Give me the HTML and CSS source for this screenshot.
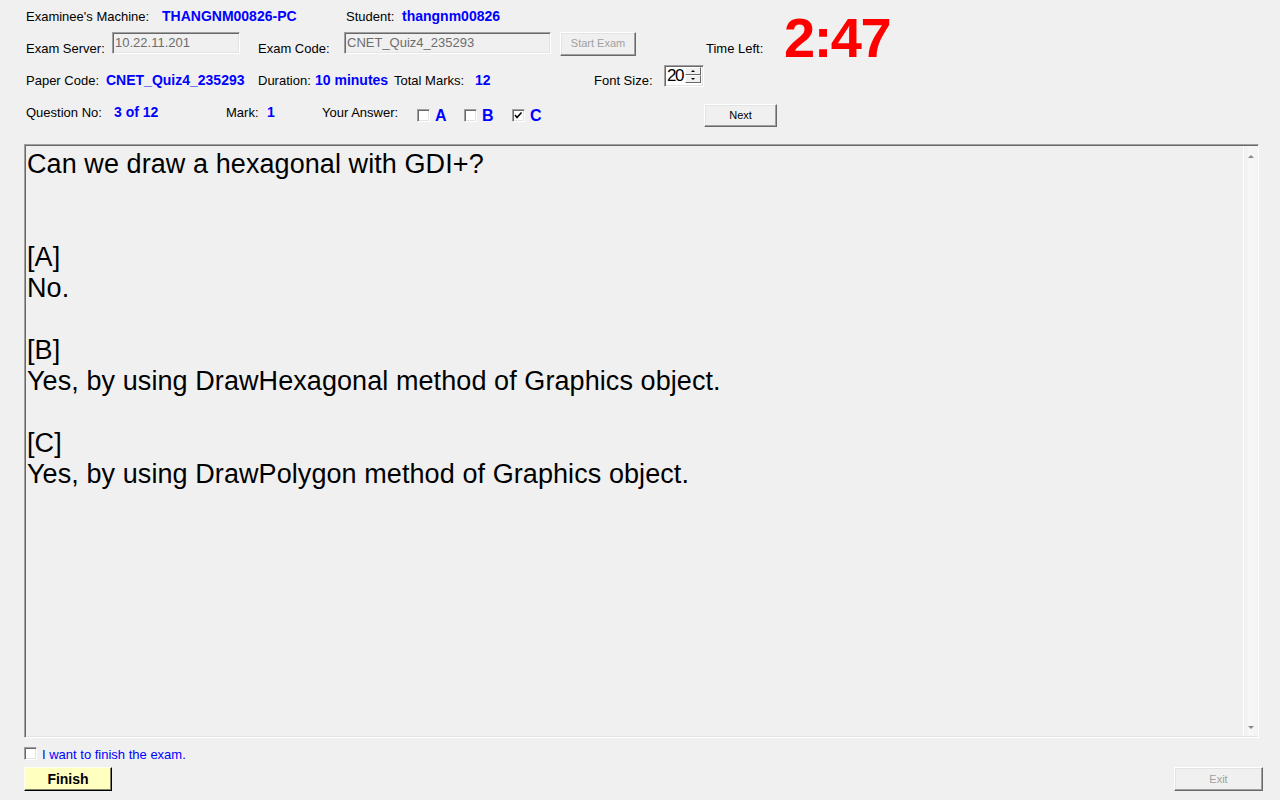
FILE: index.html
```html
<!DOCTYPE html>
<html>
<head>
<meta charset="utf-8">
<title>Exam Client</title>
<link rel="stylesheet" href="styles.css">
</head>
<body>
<div class="app">
  <div class="row r1">
    <span class="lbl w136">Examinee's Machine:</span>
    <span class="val w184">THANGNM00826-PC</span>
    <span class="lbl w56">Student:</span>
    <span class="val">thangnm00826</span>
  </div>

  <div class="row r2">
    <span class="lbl w86">Exam Server:</span>
    <div class="tbox tb1">10.22.11.201</div>
    <span class="lbl w86 ml18">Exam Code:</span>
    <div class="tbox tb2">CNET_Quiz4_235293</div>
    <div class="btn btn-start">Start Exam</div>
    <span class="lbl w78 ml70">Time Left:</span>
    <span class="timer">2:47</span>
  </div>

  <div class="row r3">
    <span class="lbl w80">Paper Code:</span>
    <span class="val w152">CNET_Quiz4_235293</span>
    <span class="lbl w57">Duration:</span>
    <span class="val w79">10 minutes</span>
    <span class="lbl w81">Total Marks:</span>
    <span class="val w119">12</span>
    <span class="lbl w70">Font Size:</span>
    <div class="spin">
      <div class="spin-val">20</div>
      <div class="spin-btns">
        <div class="spin-btn"><span class="tri-up small"></span></div>
        <div class="spin-btn"><span class="tri-down small"></span></div>
      </div>
    </div>
  </div>

  <div class="row r4">
    <span class="lbl w88">Question No:</span>
    <span class="val w112">3 of 12</span>
    <span class="lbl w41">Mark:</span>
    <span class="val w55">1</span>
    <span class="lbl w95">Your Answer:</span>
    <div class="opt w47">
      <span class="cb"></span>
      <span class="opt-letter">A</span>
    </div>
    <div class="opt w48">
      <span class="cb"></span>
      <span class="opt-letter">B</span>
    </div>
    <div class="opt w192">
      <span class="cb"><svg class="check" width="11" height="11" viewBox="0 0 11 11"><polyline points="2,5 4,7.5 8.5,2.5" fill="none" stroke="#000" stroke-width="1.6"/></svg></span>
      <span class="opt-letter">C</span>
    </div>
    <div class="btn btn-next">Next</div>
  </div>

  <div class="qbox">
    <div class="qtext">Can we draw a hexagonal with GDI+?


[A]
No.

[B]
Yes, by using DrawHexagonal method of Graphics object.

[C]
Yes, by using DrawPolygon method of Graphics object.</div>
    <div class="scroll">
      <span class="tri-up"></span>
      <span class="tri-down"></span>
    </div>
  </div>

  <div class="finish-row">
    <span class="cb"></span>
    <span class="finish-text">I want to finish the exam.</span>
  </div>

  <div class="actions">
    <div class="btn-finish">Finish</div>
    <div class="btn btn-exit">Exit</div>
  </div>
</div>
</body>
</html>
```

FILE: styles.css
```css
html, body {
  margin: 0;
  padding: 0;
  background: #f0f0f0;
  width: 1280px;
  height: 800px;
  overflow: hidden;
  font-family: "Liberation Sans", Arial, sans-serif;
  font-size: 13px;
  color: #000;
}

.app {
  width: 1280px;
  height: 800px;
}

.row {
  display: flex;
  align-items: flex-start;
  padding-left: 26px;
  box-sizing: border-box;
}

.r1 { height: 32px; padding-top: 9px; align-items: baseline; }
.r2 { height: 26px; }
.r3 { height: 38px; }
.r4 { height: 40px; margin-bottom: 8px; }

.lbl {
  font-size: 13px;
  line-height: 15px;
  white-space: nowrap;
  flex: none;
}

.val {
  font-size: 14px;
  font-weight: bold;
  line-height: 15px;
  color: #0000ff;
  white-space: nowrap;
  flex: none;
}

.r2 .lbl { margin-top: 9px; }
.r3 .lbl, .r3 .val { margin-top: 15px; }
.r4 .lbl, .r4 .val { margin-top: 9px; }

.w136 { width: 136px; }
.w184 { width: 184px; }
.w56 { width: 56px; }
.w86 { width: 86px; }
.w78 { width: 78px; }
.w80 { width: 80px; }
.w152 { width: 152px; }
.w57 { width: 57px; }
.w79 { width: 79px; }
.w81 { width: 81px; }
.w119 { width: 119px; }
.w70 { width: 70px; }
.w88 { width: 88px; }
.w112 { width: 112px; }
.w41 { width: 41px; }
.w55 { width: 55px; }
.w95 { width: 95px; }
.w47 { width: 47px; }
.w48 { width: 48px; }
.w192 { width: 192px; }
.ml18 { margin-left: 18px; }
.ml70 { margin-left: 70px; }

/* sunken text boxes */
.tbox {
  box-sizing: border-box;
  height: 22px;
  border: 1px solid;
  border-color: #a0a0a0 #ffffff #ffffff #a0a0a0;
  box-shadow: inset 1px 1px 0 #696969, inset -1px -1px 0 #e3e3e3;
  background: #f0f0f0;
  color: #6d6d6d;
  font-size: 13px;
  line-height: 20px;
  padding-left: 2px;
  white-space: nowrap;
  flex: none;
}
.tb1 { width: 128px; }
.tb2 { width: 207px; }

/* raised buttons */
.btn {
  box-sizing: border-box;
  border: 1px solid;
  border-color: #ffffff #696969 #696969 #ffffff;
  box-shadow: inset -1px -1px 0 #a0a0a0, inset 1px 1px 0 #e3e3e3;
  background: #f0f0f0;
  font-size: 11px;
  text-align: center;
  flex: none;
}

.btn-start {
  width: 76px;
  height: 24px;
  line-height: 21px;
  margin-left: 9px;
  color: #a0a0a0;
}

.btn-next {
  width: 73px;
  height: 23px;
  line-height: 21px;
  margin-top: 8px;
}

.btn-exit {
  width: 89px;
  height: 24px;
  line-height: 22px;
  color: #a0a0a0;
}

.timer {
  font-size: 56px;
  font-weight: bold;
  line-height: 56px;
  letter-spacing: -1.5px;
  color: #ff0000;
  margin-top: -22px;
  flex: none;
}

/* spinner */
.spin {
  box-sizing: border-box;
  width: 40px;
  height: 22px;
  margin-top: 7px;
  border: 1px solid;
  border-color: #a0a0a0 #ffffff #ffffff #a0a0a0;
  box-shadow: inset 1px 1px 0 #696969, inset -1px -1px 0 #e3e3e3;
  background: #ffffff;
  display: flex;
  flex: none;
}

.spin-val {
  flex: 1;
  font-size: 17px;
  line-height: 20px;
  letter-spacing: -1.5px;
  padding-left: 2px;
}

.spin-btns {
  width: 16px;
  display: flex;
  flex-direction: column;
  padding: 1px 2px 3px 0;
}

.spin-btn {
  flex: 1;
  box-sizing: border-box;
  border: 1px solid;
  border-color: #ffffff #696969 #696969 #ffffff;
  background: #f0f0f0;
  display: flex;
  align-items: center;
  justify-content: center;
}

.tri-up, .tri-down {
  width: 0;
  height: 0;
  border-left: 4px solid transparent;
  border-right: 4px solid transparent;
}
.tri-up { border-bottom: 4px solid #8a8a8a; }
.tri-down { border-top: 4px solid #8a8a8a; }
.tri-up.small { border-left-width: 2px; border-right-width: 2px; border-bottom: 2px solid #000; }
.tri-down.small { border-left-width: 2px; border-right-width: 2px; border-top: 2px solid #000; }

/* answer options */
.opt {
  display: flex;
  align-items: flex-start;
  flex: none;
}

.cb {
  box-sizing: border-box;
  width: 13px;
  height: 13px;
  border: 1px solid;
  border-color: #a0a0a0 #ffffff #ffffff #a0a0a0;
  box-shadow: inset 1px 1px 0 #696969, inset -1px -1px 0 #e3e3e3;
  background: #ffffff;
  display: block;
  position: relative;
  flex: none;
}

.opt .cb { margin-top: 13px; }

.check {
  position: absolute;
  left: 0;
  top: 0;
}

.opt-letter {
  font-size: 16px;
  font-weight: bold;
  line-height: 18px;
  color: #0000ff;
  margin-left: 5px;
  margin-top: 11px;
}

/* question box */
.qbox {
  box-sizing: border-box;
  margin-left: 24px;
  width: 1235px;
  height: 594px;
  border: 1px solid;
  border-color: #a0a0a0 #ffffff #ffffff #a0a0a0;
  box-shadow: inset 1px 1px 0 #696969, inset -1px -1px 0 #e3e3e3;
  background: #f0f0f0;
  display: flex;
}

.qtext {
  flex: 1;
  padding: 4px 0 0 2px;
  font-size: 27px;
  letter-spacing: 0.08px;
  line-height: 31px;
  white-space: pre-line;
  color: #000;
}

.scroll {
  width: 15px;
  margin: 1px 0 1px 0;
  border-left: 1px solid #ffffff;
  background: linear-gradient(to right, #f0f0f0, #f7f7f7 40%, #f3f3f3);
  display: flex;
  flex-direction: column;
  justify-content: space-between;
  align-items: center;
  padding: 9px 0 7px 0;
  box-sizing: border-box;
}

.scroll .tri-up { border-left-width: 3px; border-right-width: 3px; border-bottom-width: 3px; }
.scroll .tri-down { border-left-width: 3px; border-right-width: 3px; border-top-width: 3px; }

/* finish area */
.finish-row {
  display: flex;
  align-items: flex-start;
  margin: 9px 0 0 24px;
  height: 13px;
}

.finish-text {
  color: #0000ff;
  font-size: 13px;
  line-height: 15px;
  margin: 0 0 0 5px;
}

.actions {
  display: flex;
  justify-content: space-between;
  margin: 7px 17px 0 24px;
}

.btn-finish {
  box-sizing: border-box;
  width: 88px;
  height: 24px;
  background: #ffffc0;
  border: 1px solid;
  border-color: #fffff0 #000000 #000000 #fffff0;
  box-shadow: inset -1px -1px 0 #808060;
  font-size: 14px;
  font-weight: bold;
  line-height: 22px;
  text-align: center;
}
```
